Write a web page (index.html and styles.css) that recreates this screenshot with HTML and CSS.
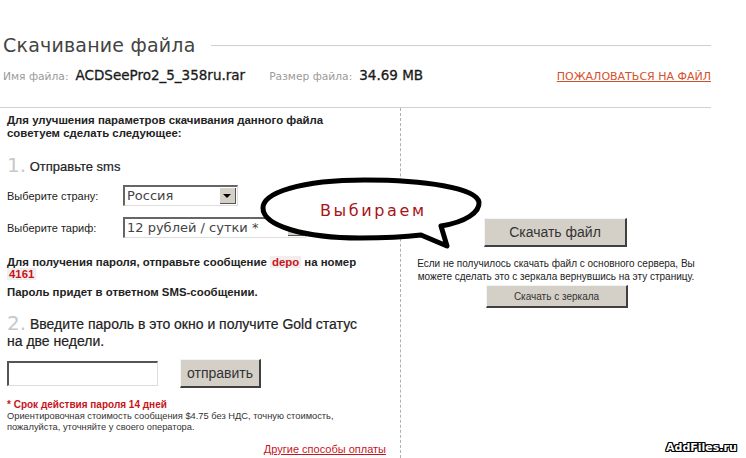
FILE: index.html
```html
<!DOCTYPE html>
<html lang="ru">
<head>
<meta charset="utf-8">
<title>Скачивание файла</title>
<link rel="stylesheet" href="styles.css">
</head>
<body>
<div class="page">
  <div class="head">
    <h1 class="title">Скачивание файла</h1>
    <div class="title-line"></div>
  </div>
  <div class="info">
    <span class="label">Имя файла:</span>
    <span class="value name">ACDSeePro2_5_358ru.rar</span>
    <span class="label">Размер файла:</span>
    <span class="value">34.69 MB</span>
    <a class="report" href="#">ПОЖАЛОВАТЬСЯ НА ФАЙЛ</a>
  </div>
  <div class="main">
    <div class="left">
      <p class="intro">Для улучшения параметров скачивания данного файла<br>советуем сделать следующее:</p>
      <h2 class="step"><span class="num">1.</span> Отправьте sms</h2>
      <div class="row first">
        <span class="row-label">Выберите страну:</span>
        <div class="select country"><span class="sel-text">Россия</span><span class="arrow"></span></div>
      </div>
      <div class="row">
        <span class="row-label">Выберите тариф:</span>
        <div class="select tariff"><span class="sel-text">12 рублей / сутки *</span><span class="arrow"></span></div>
      </div>
      <p class="sms">Для получения пароля, отправьте сообщение <span class="code">depo</span> на номер<br><span class="code">4161</span></p>
      <p class="sms reply">Пароль придет в ответном SMS-сообщении.</p>
      <h2 class="step two"><span class="num">2.</span> Введите пароль в это окно и получите Gold статус<br>на две недели.</h2>
      <div class="form">
        <div class="input"></div>
        <div class="btn send">отправить</div>
      </div>
      <p class="note"><span class="red">* Срок действия пароля 14 дней</span><br>Ориентировочная стоимость сообщения $4.75 без НДС, точную стоимость,<br>пожалуйста, уточняйте у своего оператора.</p>
      <div class="other"><a href="#">Другие способы оплаты</a></div>
    </div>
    <div class="right">
      <div class="btn big">Скачать файл</div>
      <p class="mirror-text">Если не получилось скачать файл с основного сервера, Вы<br>можете сделать это с зеркала вернувшись на эту страницу.</p>
      <div class="btn small">Скачать с зеркала</div>
    </div>
  </div>
  <div class="bubble">
    <svg width="240" height="90" viewBox="255 170 240 90">
      <path d="M447,246 L441,226 C466,222 480,212 479,202 C476,188 425,180 365,180 C300,180 263,193 263,208 C263,226 305,238 360,238 C385,238 405,237 421,235 Z" fill="#fff" stroke="#000" stroke-width="5" stroke-linejoin="round"/>
    </svg>
    <span class="bubble-text">Выбираем</span>
  </div>
  <div class="watermark">AddFiles.ru</div>
</div>
</body>
</html>
```

FILE: styles.css
```css
html, body {
  margin: 0;
  padding: 0;
  background: #fff;
}
body {
  font-family: "Liberation Sans", Arial, sans-serif;
  color: #222;
  width: 746px;
  height: 458px;
  overflow: hidden;
}
.page {
  position: relative;
  width: 746px;
  height: 458px;
}
.head {
  display: flex;
  align-items: center;
  width: 711px;
  padding-top: 33px;
  height: 24px;
}
.title {
  margin: 0 0 0 3px;
  font-family: "DejaVu Sans", sans-serif;
  font-weight: normal;
  font-size: 19px;
  line-height: 24px;
  color: #444;
  letter-spacing: 0.2px;
}
.title-line {
  flex: 1;
  height: 1px;
  background: #cfcfcf;
  margin-left: 15px;
  margin-top: 1px;
}
.info {
  display: flex;
  align-items: baseline;
  width: 711px;
  padding-top: 10px;
  box-sizing: border-box;
  border-bottom: 1px solid #d0d0d0;
  height: 51px;
}
.label {
  font-family: "DejaVu Sans", sans-serif;
  font-size: 10.7px;
  color: #9a9a9a;
  margin-left: 3px;
}
.value {
  font-family: "DejaVu Sans", sans-serif;
  font-size: 13.5px;
  color: #1a1a1a;
  margin-left: 7px;
  -webkit-text-stroke: 0.3px #1a1a1a;
}
.value.name {
  margin-left: 7px;
  margin-right: 24px;
}
.label + .value + .label {
  margin-left: 0;
}
.report {
  margin-left: auto;
  font-family: "DejaVu Sans", sans-serif;
  font-size: 11px;
  color: #d4502c;
  text-decoration: underline;
}
.main {
  display: grid;
  grid-template-columns: 400px 311px;
  height: 350px;
}
.left {
  padding-left: 7px;
}
.right {
  border-left: 1px dashed #b0b0b0;
  display: flex;
  flex-direction: column;
  align-items: center;
}
.intro {
  margin: 6px 0 0 0;
  font-size: 11.4px;
  line-height: 13px;
  font-weight: bold;
  color: #222;
}
.step {
  margin: 16px 0 0 0;
  font-weight: normal;
  font-size: 13px;
  line-height: 22px;
  color: #222;
  -webkit-text-stroke: 0.2px #222;
}
.num {
  display: inline-block;
  font-family: "DejaVu Sans", sans-serif;
  font-size: 20px;
  line-height: 16px;
  height: 16px;
  color: #c8c8c8;
  vertical-align: -1px;
  -webkit-text-stroke: 0;
}
.row {
  display: flex;
  align-items: center;
  margin-top: 11px;
}
.row.first {
  margin-top: 7px;
}
.row-label {
  width: 116px;
  font-size: 11px;
}
.select {
  display: flex;
  align-items: stretch;
  height: 21px;
  box-sizing: border-box;
  border-top: 2px solid #666;
  border-left: 2px solid #666;
  border-right: 1px solid #ddd;
  border-bottom: 1px solid #ddd;
  background: #fff;
}
.country { width: 115px; }
.tariff { width: 183px; }
.sel-text {
  flex: 1;
  font-family: "DejaVu Sans", sans-serif;
  font-size: 13px;
  line-height: 18px;
  padding-left: 2px;
  color: #444;
}
.arrow {
  width: 15px;
  margin: 1px;
  background: #d4d0c8;
  border-right: 1px solid #555;
  border-bottom: 1px solid #555;
  position: relative;
}
.arrow::after {
  content: "";
  position: absolute;
  left: 3px;
  top: 6px;
  border-left: 4px solid transparent;
  border-right: 4px solid transparent;
  border-top: 4px solid #000;
}
.sms {
  margin: 18px 0 0 0;
  font-size: 11.4px;
  line-height: 12px;
  font-weight: bold;
  color: #222;
}
.sms.reply {
  margin-top: 6px;
}
.code {
  color: #c8141a;
  background: #f2eeee;
  padding: 0 2px;
}
.step.two {
  margin-top: 17px;
  font-size: 14px;
  line-height: 17px;
}
.step.two .num {
  vertical-align: -1px;
}
.form {
  display: flex;
  align-items: center;
  margin-top: 9px;
}
.input {
  width: 151px;
  height: 25px;
  box-sizing: border-box;
  border-top: 2px solid #555;
  border-left: 2px solid #555;
  border-right: 1px solid #ddd;
  border-bottom: 1px solid #ddd;
  background: #fff;
}
.btn {
  background: #d4d0c8;
  border-top: 1px solid #f4f4f4;
  border-left: 1px solid #f4f4f4;
  border-right: 2px solid #404040;
  border-bottom: 2px solid #404040;
  box-sizing: border-box;
  display: flex;
  align-items: center;
  justify-content: center;
  color: #333;
}
.send {
  margin-left: 22px;
  width: 81px;
  height: 29px;
  font-size: 14px;
}
.note {
  margin: 11px 0 0 0;
  font-size: 9.3px;
  line-height: 11px;
  color: #333;
}
.red {
  color: #c8141a;
  font-weight: bold;
  font-size: 10px;
}
.other {
  width: 379px;
  text-align: right;
  margin-top: 10px;
  font-size: 11px;
}
.other a {
  color: #c8141a;
  text-decoration: underline;
}
.big {
  margin-top: 110px;
  width: 143px;
  height: 29px;
  font-size: 14px;
  margin-left: -1px;
}
.mirror-text {
  margin: 10px 0 0 0;
  font-size: 10px;
  line-height: 13px;
  text-align: center;
  color: #222;
}
.small {
  margin-top: 2px;
  width: 142px;
  height: 23px;
  font-size: 10px;
  margin-left: 2px;
}
.bubble {
  position: absolute;
  left: 255px;
  top: 170px;
  width: 240px;
  height: 90px;
}
.bubble svg {
  display: block;
}
.bubble-text {
  position: absolute;
  left: 65px;
  top: 31px;
  font-family: "DejaVu Sans", sans-serif;
  font-size: 16px;
  letter-spacing: 2.6px;
  color: #a8141a;
}
.watermark {
  position: absolute;
  left: 666px;
  top: 441px;
  font-family: "DejaVu Sans", sans-serif;
  font-weight: bold;
  font-size: 11px;
  color: #fff;
  text-shadow: 1px 0 0 #000, -1px 0 0 #000, 0 1px 0 #000, 0 -1px 0 #000, 1px 1px 0 #000, -1px -1px 0 #000, 1px -1px 0 #000, -1px 1px 0 #000;
}
```
